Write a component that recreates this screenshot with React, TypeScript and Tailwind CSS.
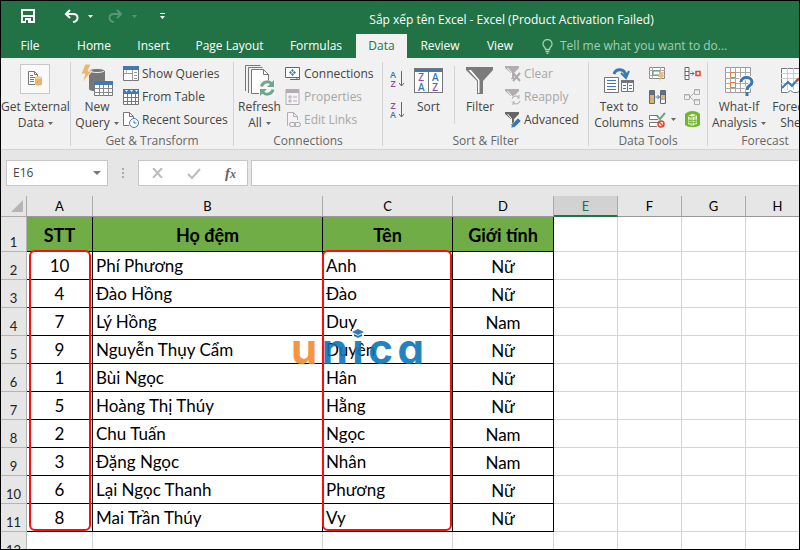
import type { ReactNode } from 'react';

const TABS = [
  { label: 'File', width: 'w-[58px]' },
  { label: 'Home', width: 'w-[70px]' },
  { label: 'Insert', width: 'w-[49px]' },
  { label: 'Page Layout', width: 'w-[103px]' },
  { label: 'Formulas', width: 'w-[70px] mr-[5px]' },
  { label: 'Data', width: 'w-[51px]' },
  { label: 'Review', width: 'w-[66px]' },
  { label: 'View', width: 'w-[54px]' },
];

const COLUMNS = [
  { name: 'A', width: 'w-[66px]' },
  { name: 'B', width: 'w-[230px]' },
  { name: 'C', width: 'w-[130px]' },
  { name: 'D', width: 'w-[101px]' },
  { name: 'E', width: 'w-[64px]' },
  { name: 'F', width: 'w-[64px]' },
  { name: 'G', width: 'w-[64px]' },
  { name: 'H', width: 'w-[64px]' },
];

const EMPTY_COLUMNS = ['E', 'F', 'G', 'H'];

const PEOPLE = [
  { stt: 10, last: 'Phí Phương', first: 'Anh', gender: 'Nữ' },
  { stt: 4, last: 'Đào Hồng', first: 'Đào', gender: 'Nữ' },
  { stt: 7, last: 'Lý Hồng', first: 'Duy', gender: 'Nam' },
  { stt: 9, last: 'Nguyễn Thụy Cẩm', first: 'Duyên', gender: 'Nữ' },
  { stt: 1, last: 'Bùi Ngọc', first: 'Hân', gender: 'Nữ' },
  { stt: 5, last: 'Hoàng Thị Thúy', first: 'Hằng', gender: 'Nữ' },
  { stt: 2, last: 'Chu Tuấn', first: 'Ngọc', gender: 'Nam' },
  { stt: 3, last: 'Đặng Ngọc', first: 'Nhân', gender: 'Nam' },
  { stt: 6, last: 'Lại Ngọc Thanh', first: 'Phương', gender: 'Nữ' },
  { stt: 8, last: 'Mai Trần Thúy', first: 'Vy', gender: 'Nữ' },
];

const Caret = ({ className = 'text-[#666]' }: { className?: string }) => (
  <svg width="5" height="3" viewBox="0 0 5 3" className={`inline-block shrink-0 ${className}`}>
    <path d="M0 0h5L2.5 3z" fill="currentColor" />
  </svg>
);

/* Ribbon icons */

const ExternalDataIcon = () => (
  <svg width="16" height="17" viewBox="0 0 16 17" fill="none">
    <path d="M8 14.5H1.5v-13h6l3 3V7" stroke="#777" fill="#fff" />
    <path d="M7.5 1.5v3h3M3 5.5h3M3 7.5h5M3 9.5h4M3 11.5h4" stroke="#777" />
    <path d="M8 7.5v6.5c0 2 7 2 7 0V7.5z" fill="#e8b468" />
    <ellipse cx="11.5" cy="7.5" rx="3.5" ry="1.5" fill="#f3cf98" />
  </svg>
);

const NewQueryIcon = () => (
  <svg width="32" height="33" viewBox="0 0 32 33" fill="none">
    <path d="M8 6v19c0 3 16 3 16 0V6z" fill="#777" />
    <ellipse cx="16" cy="6.5" rx="7.5" ry="2" fill="#777" stroke="#eee" />
    <path d="M4 0h6L7 7h4L1 19l3-9H0z" fill="#efb66b" stroke="#f1f1f1" />
    <path d="M13.5 17.5h18v14h-18z" fill="#fff" stroke="#777" />
    <path d="M13 17h19v4H13z" fill="#4179b5" />
    <path d="M13 24.5h19M13 28.5h19M18.5 21v11M22.5 21v11M27.5 21v11" stroke="#888" />
  </svg>
);

const ShowQueriesIcon = () => (
  <svg width="16" height="16" viewBox="0 0 16 16" fill="none">
    <path d="M.5.5h15v14H.5z" fill="#fff" stroke="#777" />
    <path d="M0 0h16v4H0z" fill="#4179b5" />
    <path d="M9.5 4v11M1 7.5h8M11 6.5h3M11 9.5h3M11 12.5h3" stroke="#999" />
    <path d="M3.5 4v3" stroke="#bbb" />
  </svg>
);

const FromTableIcon = () => (
  <svg width="16" height="16" viewBox="0 0 16 16" fill="none">
    <path d="M.5.5h15v15H.5z" fill="#fff" stroke="#777" />
    <path d="M0 0h16v5H0z" fill="#4179b5" />
    <path d="M2 1h3L3.5 3zM7 1h3L8.5 3zM12 1h3l-1.5 2z" fill="#fff" />
    <path d="M0 8.5h16M0 12.5h16M4.5 5v11M8.5 5v11M12.5 5v11" stroke="#777" />
  </svg>
);

const RecentSourcesIcon = () => (
  <svg width="16" height="16" viewBox="0 0 16 16" fill="none">
    <path d="M6 13.5H.5V.5h6l4 4V7" fill="#fff" stroke="#777" />
    <path d="M6.5.5v4h4" stroke="#777" />
    <circle cx="11" cy="11" r="4.5" fill="#fff" stroke="#4179b5" />
    <path d="M11 8.5V11h2.5" stroke="#4179b5" />
  </svg>
);

const RefreshAllIcon = () => (
  <svg width="30" height="31" viewBox="0 0 30 31" fill="none">
    <path d="M.5 26V.5h15M3.5 28V2.5h14" stroke="#777" />
    <path d="M6.5 28.5v-24h12l5 5v19z" fill="#fff" stroke="#777" />
    <path d="M18.5 4.5v5h5" stroke="#777" />
    <path d="M14 15h16v16H14z" fill="#f6f6f6" />
    <path d="M16.500 21.500a6 6 0 0 1 10-3M28 24.500a6 6 0 0 1-10 3" stroke="#6ba88f" strokeWidth="3" />
    <path d="M29 15v7h-7zM15 31v-7h7z" fill="#6ba88f" />
  </svg>
);

const ConnectionsIcon = () => (
  <svg width="16" height="14" viewBox="0 0 16 14" fill="none">
    <path d="M.5.5h14v10H.5z" fill="#fff" stroke="#666" />
    <path d="M5 12.5h9.5v-2M12 10.5v2" stroke="#666" />
    <path d="M7.5 2L9 3.500 7.500 5 6 3.500zM7.500 6L9 7.500 7.500 9 6 7.500zM5.500 4L7 5.500 5.500 7 4 5.500zM9.500 4L11 5.500 9.500 7 8 5.500z" fill="#4179b5" />
  </svg>
);

const PropertiesIcon = () => (
  <svg width="15" height="16" viewBox="0 0 15 16" fill="none">
    <path d="M1 .5h13v15H1z" fill="#f5f2f5" stroke="#b3adb3" />
    <path d="M1 0h13v4H1z" fill="#b3adb3" />
    <path d="M4 7h2v2H4zM4 11h2v2H4z" stroke="#b3adb3" />
    <path d="M8 8h4M8 12h4" stroke="#b3adb3" />
  </svg>
);

const EditLinksIcon = () => (
  <svg width="16" height="16" viewBox="0 0 16 16" fill="none">
    <path d="M3 13.5H2.5V.5h6l4 4V8M8.5.5v4h4" fill="#f5f2f5" stroke="#b3adb3" />
    <rect x="4.5" y="10.5" width="6" height="4" rx="2" stroke="#a5a0a5" />
    <rect x="9.5" y="10.5" width="6" height="4" rx="2" stroke="#a5a0a5" />
  </svg>
);

const SmallSortIcon = ({ top, bottom }: { top: string; bottom: string }) => (
  <span className="flex items-center gap-[3px]">
    <span className="flex flex-col text-center text-[9px] leading-[9px] font-semibold">
      <span className={top === 'A' ? 'text-[#3b77b7]' : 'text-[#8a49a8]'}>{top}</span>
      <span className={bottom === 'A' ? 'text-[#3b77b7]' : 'text-[#8a49a8]'}>{bottom}</span>
    </span>
    <svg width="5" height="16" viewBox="0 0 5 16" fill="none">
      <path d="M2.5 0v15M0 12l2.5 3L5 12" stroke="#666" />
    </svg>
  </span>
);

const SortIcon = () => (
  <span className="flex h-[25px] w-[29px] flex-col border border-[#777] bg-white text-[10px] leading-[10px] font-semibold">
    <span className="h-[3px] shrink-0 bg-[#4179b5]" />
    <span className="grid flex-1 grid-cols-2 text-center">
      <span className="border-r border-[#777] text-[#8a49a8]">Z</span>
      <span className="text-[#3b77b7]">A</span>
      <span className="border-r border-[#777] text-[#3b77b7]">A</span>
      <span className="text-[#8a49a8]">Z</span>
    </span>
  </span>
);

const FilterIcon = () => (
  <svg width="28" height="28" viewBox="0 0 28 28" fill="none">
    <path d="M0 0h27v3L17 14v13h-6V14L0 3z" fill="#7b7b7b" />
    <path d="M2.5 3l9.5 10.500V26h1.500V13L5 3z" fill="#fff" />
  </svg>
);

const SmallFilterIcon = ({ kind }: { kind: 'clear' | 'reapply' | 'advanced' }) => (
  <svg width="16" height="16" viewBox="0 0 16 16" fill="none">
    <path d="M0 0h14v2L9 7v6H6V7L0 2z" fill={kind === 'advanced' ? '#666' : '#b3adb3'} />
    <path d="M2.5 2l4 4.5V12" stroke="#f8f8f8" />
    {kind === 'clear' && <path d="M8 7l7 8M15 7l-7 8" stroke="#aaa" strokeWidth="2" />}
    {kind === 'reapply' && (
      <>
        <circle cx="11" cy="11" r="5" fill="#f1f1f1" />
        <path d="M7 10a4 4 0 0 1 7-1.500V6M15 12a4 4 0 0 1-7 1.500V16M14.500 9H12M7.500 13H10" stroke="#aaa" />
      </>
    )}
    {kind === 'advanced' && <path d="M6 16l1-4 6-6 3 3-6 6z" fill="#3b77b7" stroke="#f1f1f1" strokeWidth=".5" />}
  </svg>
);

const TextToColumnsIcon = () => (
  <svg width="31" height="26" viewBox="0 0 31 26" fill="none">
    <path d="M.5 9.5h14v15H.5z" fill="#fff" stroke="#777" />
    <path d="M3 12.5h9M3 15.5h9M3 18.5h9M3 21.5h9" stroke="#4179b5" />
    <path d="M17.5 12.5h12v11h-12z" fill="#fff" stroke="#777" />
    <path d="M17 12h13v3H17z" fill="#777" />
    <path d="M23.5 15v9" stroke="#777" />
    <path d="M19 17.5h3M19 20.5h3M25 17.5h3M25 20.5h3" stroke="#4179b5" />
    <path d="M10 6c2-6 11-6 12 2" stroke="#3b77b7" strokeWidth="3" />
    <path d="M17 5l5 5 3-7" stroke="#3b77b7" strokeWidth="2" />
  </svg>
);

const FlashFillIcon = () => (
  <svg width="17" height="16" viewBox="0 0 17 16" fill="none">
    <path d="M.5 1.5h15v11H.5z" fill="#fff" stroke="#888" />
    <path d="M0 4.5h16M0 9.5h10M3.5 1v12M11.5 1v4" stroke="#aaa" />
    <path d="M4 5h7v4H4z" fill="#fff" stroke="#4d9a76" />
    <path d="M11 6h4l-1 3h2l-6 6 1-4H9z" fill="#edbd79" />
  </svg>
);

const RemoveDuplicatesIcon = () => (
  <svg width="17" height="14" viewBox="0 0 17 14" fill="none">
    <path d="M.5.5h5v13h-5zM11.5.5h5v13h-5z" fill="#fff" stroke="#666" />
    <path d="M1 1h4v3H1zM12 1h4v3h-4z" fill="#4179b5" />
    <path d="M1 5h4v3H1zM1 10h4v3H1zM12 5h4v3h-4z" fill="#e8b468" />
    <path d="M0 4.5h6M0 9h6M11 4.5h6M11 9h6" stroke="#666" />
    <path d="M6.5 7h4M8.5 5l2 2-2 2" stroke="#4179b5" />
  </svg>
);

const ValidationIcon = () => (
  <svg width="17" height="16" viewBox="0 0 17 16" fill="none">
    <path d="M9 3.5H.5v4H9M9 10.5H.5v4H8" fill="#fff" stroke="#777" />
    <path d="M8 4l3 3 5-6" stroke="#6ba88f" strokeWidth="2" />
    <circle cx="12" cy="12" r="3" fill="#fff" stroke="#d6492a" strokeWidth="1.5" />
    <path d="M10 10l4 4" stroke="#d6492a" strokeWidth="1.5" />
  </svg>
);

const ConsolidateIcon = () => (
  <svg width="17" height="13" viewBox="0 0 17 13" fill="none">
    <path d="M1 .5h4v12H1zM1 4.5h4M1 8.5h4" fill="#fff" stroke="#666" />
    <path d="M6 6.5h4M8 4.5l2 2-2 2" stroke="#4179b5" />
    <path d="M12 4.5h4v4h-4z" fill="#fff" stroke="#d6492a" strokeWidth="1.5" />
  </svg>
);

const RelationshipsIcon = () => (
  <svg width="17" height="16" viewBox="0 0 17 16" fill="none" stroke="#b3adb3">
    <path d="M.5 5.5h5v5h-5zM10.5.5h5v5h-5zM10.5 10.5h5v5h-5z" />
    <path d="M0 6h6M10 1h6M10 11h6M6 8l4-4M6 8l4 4" />
  </svg>
);

const DataModelIcon = () => (
  <svg width="17" height="17" viewBox="0 0 17 17" fill="none">
    <path d="M1 3c4-4 11-4 15 0v11c-4 3-11 3-15 0z" fill="#72b62b" />
    <path d="M4 5l4-2 5 1v9l-5 2-4-2z" fill="#fff" />
    <path d="M4 5l4 1 5-2M8 6v9M4 9l4 1 5-1M6 5v9M11 5v9M4 11l4 1 5-1" stroke="#72b62b" />
  </svg>
);

const WhatIfIcon = () => (
  <svg width="29" height="30" viewBox="0 0 29 30" fill="none">
    <path d="M.5 1.5h25v25H.5z" fill="#fff" stroke="#999" />
    <path d="M0 6.5h26M0 12.5h26M0 17.5h26M0 22.5h26M5.5 1v26M10.5 1v26M15.5 1v26M20.5 1v26" stroke="#aaa" />
    <path d="M5.5 6.5h5v5h-5zM5.5 16.5h5v5h-5z" fill="#fff" stroke="#e57a33" />
    <path d="M16 16c0-6 11-6 11 0 0 4-5 3-5 8" stroke="#fff" strokeWidth="5" />
    <path d="M16 16c0-6 11-6 11 0 0 4-5 3-5 8M22 26v4" stroke="#3b77b7" strokeWidth="3" />
  </svg>
);

const ForecastIcon = () => (
  <svg width="30" height="26" viewBox="0 0 30 26" fill="none">
    <path d="M.5.5h29v22l-3 2h-4l-3-2-3 2h-4l-3-2-3 2h-6z" fill="#fff" stroke="#777" />
    <path d="M0 5.5h30M0 10.5h30M0 15.5h30M6.5 0v22M12.5 0v22M18.5 0v22M24.5 0v22" stroke="#ccc" />
    <path d="M1 20l6-6 4 4 6-7" stroke="#3b77b7" strokeWidth="2" />
    <path d="M16 13l5-6 3 1 6-6" stroke="#d6492a" strokeWidth="2" />
  </svg>
);

/* Ribbon building blocks */

interface GroupProps {
  label: string;
  className?: string;
  children: ReactNode;
}

const Group = ({ label, className = '', children }: GroupProps) => (
  <section className={`flex shrink-0 flex-col pt-1 ${className}`}>
    <div className="flex h-[72px] items-start">{children}</div>
    <h2 className="text-center text-[12px] leading-4 whitespace-nowrap text-[#666]">{label}</h2>
  </section>
);

const Divider = ({ className = 'h-[84px]' }: { className?: string }) => (
  <div className={`mt-1 w-px shrink-0 bg-[#d4d4d4] ${className}`} />
);

interface BigButtonProps {
  icon: ReactNode;
  lines: string[];
  caret?: boolean;
  className?: string;
}

const BigButton = ({ icon, lines, caret, className = '' }: BigButtonProps) => (
  <button className={`flex shrink-0 flex-col items-center text-[12px] leading-4 whitespace-nowrap text-[#444] ${className}`}>
    <span className="flex h-[37px] items-center">{icon}</span>
    {lines.map((line, i) => (
      <span key={line} className="flex items-center gap-1">
        {line}
        {caret && i === lines.length - 1 && <Caret />}
      </span>
    ))}
  </button>
);

interface SmallButtonProps {
  icon: ReactNode;
  label: string;
  disabled?: boolean;
}

const SmallButton = ({ icon, label, disabled }: SmallButtonProps) => (
  <button
    disabled={disabled}
    className="flex h-[23px] items-center gap-[3px] text-[12px] leading-4 whitespace-nowrap text-[#444] disabled:text-[#a6a6a6]"
  >
    <span className="w-4">{icon}</span>
    {label}
  </button>
);

const TitleBar = () => (
  <div className="flex h-[33px] items-center text-white">
    <div className="flex w-[170px] shrink-0 items-center pb-[3px] pl-5">
      <button aria-label="Save">
        <svg width="14" height="14" viewBox="0 0 14 14" fill="none">
          <path d="M1 1h12v12H1z" stroke="currentColor" strokeWidth="2" />
          <path d="M2 7h10" stroke="currentColor" strokeWidth="2" />
          <path d="M4 9h6v4H4z" fill="currentColor" />
          <path d="M5 11h2v3H5z" fill="#217346" />
        </svg>
      </button>
      <button aria-label="Undo" className="ml-[29px] flex items-center gap-[9px]">
        <svg width="15" height="14" viewBox="0 0 15 14" fill="none" stroke="currentColor" strokeWidth="2">
          <path d="M6 1L2 5l4 4M2 5h7c6 0 6 7 0 8" />
        </svg>
        <Caret className="text-white" />
      </button>
      <button aria-label="Redo" className="ml-[15px] flex items-center gap-[9px] opacity-25" disabled>
        <svg width="15" height="14" viewBox="0 0 15 14" fill="none" stroke="currentColor" strokeWidth="2">
          <path d="M9 1l4 4-4 4M13 5H6c-6 0-6 7 0 8" />
        </svg>
        <Caret className="text-white" />
      </button>
      <button aria-label="Customize Quick Access Toolbar" className="ml-[23px]">
        <svg width="5" height="6" viewBox="0 0 5 6">
          <path d="M0 0h5v1H0zM0 3h5L2.5 6z" fill="currentColor" />
        </svg>
      </button>
    </div>
    <h1 className="flex-1 pt-1 pl-[53px] text-center text-[12px] leading-4">
      Sắp xếp tên Excel - Excel (Product Activation Failed)
    </h1>
  </div>
);

const RibbonTabs = () => (
  <nav className="flex h-6 text-[12px] text-white">
    {TABS.map((tab) => (
      <button
        key={tab.label}
        className={`shrink-0 whitespace-nowrap ${tab.width} ${tab.label === 'Data' ? 'bg-[#f1f1f1] text-[#217346]' : ''}`}
      >
        {tab.label}
      </button>
    ))}
    <label className="flex flex-1 items-center gap-[7px] pl-[15px] text-[#a6cdb6]">
      <svg width="11" height="15" viewBox="0 0 11 15" fill="none" stroke="currentColor">
        <path d="M3.5 10.5C3.5 8 1 8 1 5a4.500 4.500 0 0 1 9 0c0 3-2.500 3-2.500 5.500zM3.500 12.500h4M4.500 14.500h2" strokeWidth="1.3" />
      </svg>
      <input
        aria-label="Tell me"
        placeholder="Tell me what you want to do..."
        className="min-w-0 flex-1 bg-transparent outline-none placeholder:text-[#a6cdb6]"
      />
    </label>
  </nav>
);

const Ribbon = () => (
  <div className="flex h-[92px] overflow-hidden border-b border-[#d2d2d2] bg-[#f1f1f1]">
    <Group label="" className="w-[69px] items-center">
      <BigButton
        icon={
          <span className="mb-1 flex size-[30px] items-center justify-center border border-[#c8c8c8] bg-[#fafafa]">
            <ExternalDataIcon />
          </span>
        }
        lines={['Get External', 'Data']}
        caret
      />
    </Group>
    <Divider />
    <Group label="Get & Transform" className="w-[162px]">
      <BigButton icon={<NewQueryIcon />} lines={['New', 'Query']} caret className="w-[52px]" />
      <div className="flex flex-col">
        <SmallButton icon={<ShowQueriesIcon />} label="Show Queries" />
        <SmallButton icon={<FromTableIcon />} label="From Table" />
        <SmallButton icon={<RecentSourcesIcon />} label="Recent Sources" />
      </div>
    </Group>
    <Divider />
    <Group label="Connections" className="w-[148px]">
      <BigButton icon={<RefreshAllIcon />} lines={['Refresh', 'All']} caret className="w-[51px]" />
      <div className="flex flex-col">
        <SmallButton icon={<ConnectionsIcon />} label="Connections" />
        <SmallButton icon={<PropertiesIcon />} label="Properties" disabled />
        <SmallButton icon={<EditLinksIcon />} label="Edit Links" disabled />
      </div>
    </Group>
    <Divider />
    <Group label="Sort & Filter" className="w-[205px]">
      <div className="flex w-7 flex-col items-center gap-[13px] pt-2">
        <button aria-label="Sort A to Z">
          <SmallSortIcon top="A" bottom="Z" />
        </button>
        <button aria-label="Sort Z to A">
          <SmallSortIcon top="Z" bottom="A" />
        </button>
      </div>
      <BigButton icon={<SortIcon />} lines={['Sort']} className="w-[35px]" />
      <Divider className="ml-2 h-[58px]" />
      <BigButton icon={<FilterIcon />} lines={['Filter']} className="w-[50px]" />
      <div className="flex flex-col">
        <SmallButton icon={<SmallFilterIcon kind="clear" />} label="Clear" disabled />
        <SmallButton icon={<SmallFilterIcon kind="reapply" />} label="Reapply" disabled />
        <SmallButton icon={<SmallFilterIcon kind="advanced" />} label="Advanced" />
      </div>
    </Group>
    <Divider />
    <Group label="Data Tools" className="w-[118px]">
      <BigButton icon={<TextToColumnsIcon />} lines={['Text to', 'Columns']} className="w-[60px]" />
      <div className="grid grid-cols-[35px_17px] items-center">
        <button aria-label="Flash Fill" className="h-[23px]"><FlashFillIcon /></button>
        <button aria-label="Consolidate" className="h-[23px]"><ConsolidateIcon /></button>
        <button aria-label="Remove Duplicates" className="h-[23px]"><RemoveDuplicatesIcon /></button>
        <button aria-label="Relationships" className="h-[23px]"><RelationshipsIcon /></button>
        <button aria-label="Data Validation" className="flex h-[23px] items-center gap-[5px]">
          <ValidationIcon />
          <Caret />
        </button>
        <button aria-label="Manage Data Model" className="h-[23px]"><DataModelIcon /></button>
      </div>
    </Group>
    <Divider />
    <Group label="Forecast" className="w-[114px]">
      <BigButton icon={<WhatIfIcon />} lines={['What-If', 'Analysis']} caret className="w-[62px]" />
      <BigButton icon={<ForecastIcon />} lines={['Forecast', 'Sheet']} className="w-[52px]" />
    </Group>
  </div>
);

const FormulaBar = () => (
  <div className="flex h-[46px] items-center bg-[#e6e6e6] pt-[10px] pb-[10px] pl-[5px]">
    <div className="flex h-[26px] w-[102px] shrink-0 items-center border border-[#c6c6c6] bg-white px-[6px]">
      <input aria-label="Name Box" defaultValue="E16" className="min-w-0 flex-1 text-[12px] text-[#444] outline-none" />
      <button aria-label="Open name list" className="flex">
        <svg width="8" height="4" viewBox="0 0 8 4">
          <path d="M0 0h8L4 4z" fill="#777" />
        </svg>
      </button>
    </div>
    <svg width="2" height="10" viewBox="0 0 2 10" className="mx-[14px] shrink-0">
      <path d="M0 0h2v2H0zM0 4h2v2H0zM0 8h2v2H0z" fill="#aaa" />
    </svg>
    <div className="flex h-[26px] w-[110px] shrink-0 items-center border border-[#c6c6c6] bg-white pl-[13px]">
      <button aria-label="Cancel">
        <svg width="11" height="10" viewBox="0 0 11 10" fill="none">
          <path d="M1 0l9 10M10 0L1 10" stroke="#bdbdbd" strokeWidth="2" />
        </svg>
      </button>
      <button aria-label="Enter" className="ml-6">
        <svg width="14" height="11" viewBox="0 0 14 11" fill="none">
          <path d="M1 6l4 4 8-9" stroke="#bdbdbd" strokeWidth="2" />
        </svg>
      </button>
      <button
        aria-label="Insert Function"
        className="ml-6 font-['Liberation_Serif',serif] text-[15px] leading-4 font-bold text-[#666] italic"
      >
        f<span className="text-[12px]">x</span>
      </button>
    </div>
    <input aria-label="Formula" className="ml-[3px] h-[26px] min-w-0 flex-1 border border-r-0 border-[#c6c6c6] bg-white outline-none" />
  </div>
);

const HEAD_CELL = 'border-r border-b border-black bg-[#70ad47] p-0 pt-[2px] text-[18px] font-bold';
const DATA_CELL = 'border-r border-b border-black p-0';
const BLANK_CELL = 'border-r border-b border-[#d4d4d4] p-0';
const ROW_NUMBER =
  'border-r border-b border-[#b5b5b5] bg-[#e6e6e6] p-0 pb-px text-center align-bottom text-[13px] leading-4 font-normal text-[#222]';

const Logo = () => (
  <div className="absolute top-[137px] left-[290px] flex w-[133px] items-end justify-between font-['Inter',sans-serif] text-[42px] leading-8 font-bold text-[#0b76b8] opacity-90 [font-feature-settings:'cv11']">
    <span className="text-[#f58a2c]">u</span>
    <span>n</span>
    <span className="relative">
      i
      <svg width="12" height="9" viewBox="0 0 12 9" className="absolute -top-1 left-0 bg-white">
        <path d="M0 3l6-3 6 3-6 3zM2 5l4 2 4-2v2l-4 2-4-2z" fill="#1b6ea8" />
      </svg>
    </span>
    <span>c</span>
    <span>a</span>
  </div>
);

const Sheet = () => (
  <main className="relative min-h-0 flex-1 overflow-hidden bg-white">
    <table className="w-[809px] table-fixed border-separate border-spacing-0 font-['Lato','Noto_Sans',sans-serif] text-[17px] text-black">
      <colgroup>
        <col className="w-[26px]" />
        {COLUMNS.map((col) => (
          <col key={col.name} className={col.width} />
        ))}
      </colgroup>
      <thead>
        <tr className="h-[21px] bg-[#e6e6e6] text-[13px] leading-4">
          <th className="border-r border-b border-[#ababab] p-0">
            <svg width="12" height="12" viewBox="0 0 12 12" className="ml-[10px]">
              <path d="M12 0v12H0z" fill="#b5b5b5" />
            </svg>
          </th>
          {COLUMNS.map((col) => (
            <th
              key={col.name}
              className={`border-r border-r-[#ababab] p-0 font-normal ${col.name === 'E' ? 'border-b-2 border-b-[#217346] bg-[#d2d2d2] text-[#217346]' : 'border-b border-b-[#999]'}`}
            >
              {col.name}
            </th>
          ))}
        </tr>
      </thead>
      <tbody>
        <tr className="h-[35px]">
          <th className={ROW_NUMBER}>1</th>
          <th className={HEAD_CELL}>STT</th>
          <th className={HEAD_CELL}>Họ đệm</th>
          <th className={HEAD_CELL}>Tên</th>
          <th className={HEAD_CELL}>Giới tính</th>
          {EMPTY_COLUMNS.map((name) => (
            <td key={name} className={BLANK_CELL} />
          ))}
        </tr>
        {PEOPLE.map((person, i) => (
          <tr key={person.stt} className="h-7 leading-6">
            <th className={ROW_NUMBER}>{i + 2}</th>
            <td className={`${DATA_CELL} text-center`}>{person.stt}</td>
            <td className={`${DATA_CELL} pl-[3px]`}>{person.last}</td>
            <td className={`${DATA_CELL} pl-[3px]`}>{person.first}</td>
            <td className={`${DATA_CELL} pt-[3px] text-center`}>{person.gender}</td>
            {EMPTY_COLUMNS.map((name) => (
              <td key={name} className={BLANK_CELL} />
            ))}
          </tr>
        ))}
        <tr className="h-7">
          <th className={ROW_NUMBER}>12</th>
          {COLUMNS.map((col) => (
            <td key={col.name} className={BLANK_CELL} />
          ))}
        </tr>
      </tbody>
    </table>

    {/* highlighted columns and watermark sit over the cells */}
    <div className="absolute top-[54px] left-[28px] h-[281px] w-[62px] rounded-md border-2 border-[#fb0d0d]" />
    <div className="absolute top-[54px] left-[321px] h-[281px] w-[130px] rounded-md border-2 border-[#fb0d0d]" />
    <Logo />
  </main>
);

export default function App() {
  return (
    <div className="flex h-screen flex-col overflow-hidden border border-black bg-[#e6e6e6] font-['Open_Sans','Noto_Sans',sans-serif]">
      <header className="bg-[#217346]">
        <TitleBar />
        <RibbonTabs />
      </header>
      <Ribbon />
      <FormulaBar />
      <Sheet />
    </div>
  );
}
